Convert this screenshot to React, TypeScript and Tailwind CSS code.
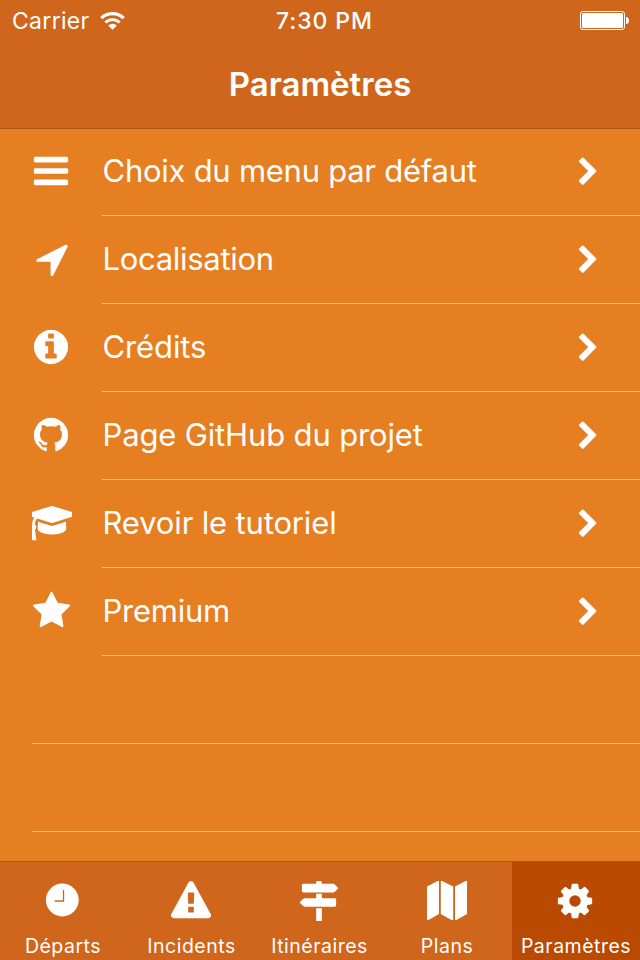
import React from "react";

const BARS =
  "M1664 1344v128q0 26-19 45t-45 19h-1408q-26 0-45-19t-19-45v-128q0-26 19-45t45-19h1408q26 0 45 19t19 45zm0-512v128q0 26-19 45t-45 19h-1408q-26 0-45-19t-19-45v-128q0-26 19-45t45-19h1408q26 0 45 19t19 45zm0-512v128q0 26-19 45t-45 19h-1408q-26 0-45-19t-19-45v-128q0-26 19-45t45-19h1408q26 0 45 19t19 45z";
const ARROW =
  "M1593 349l-640 1280q-17 35-57 35-5 0-15-2-22-5-35.500-22.500t-13.500-39.500v-576h-576q-22 0-39.500-13.500t-22.500-35.500 4-42 29-30l1280-640q13-7 29-7 27 0 45 19 15 14 18.500 34.500t-6.500 39.500z";
const INFO =
  "M1152 1376v-160q0-14-9-23t-23-9h-96v-512q0-14-9-23t-23-9h-320q-14 0-23 9t-9 23v160q0 14 9 23t23 9h96v320h-96q-14 0-23 9t-9 23v160q0 14 9 23t23 9h448q14 0 23-9t9-23zm-128-896v-160q0-14-9-23t-23-9h-192q-14 0-23 9t-9 23v160q0 14 9 23t23 9h192q14 0 23-9t9-23zm640 416q0 209-103 385.500t-279.500 279.500-385.500 103-385.500-103-279.500-279.500-103-385.500 103-385.500 279.500-279.500 385.500-103 385.500 103 279.500 279.500 103 385.500z";
const GITHUB =
  "M896 128q209 0 385.500 103t279.500 279.500 103 385.500q0 251-146.500 451.500t-378.500 277.500q-27 5-40-7t-13-30q0-3 .5-76.500t.5-134.500q0-97-52-142 57-6 102.500-18t94-39 81-66.500 53-105 20.500-150.500q0-119-79-206 37-91-8-204-28-9-81 11t-92 44l-38 24q-93-26-192-26t-192 26q-16-11-42.500-27t-83.500-38.500-85-13.500q-45 113-8 204-79 87-79 206 0 85 20.500 150t52.500 105 80.500 67 94 39 102.500 18q-39 36-49 103-21 10-45 15t-57 5-65.500-21.500-55.500-62.500q-19-32-48.500-52t-49.500-24l-20-3q-21 0-29 4.500t-5 11.500 9 14 13 12l7 5q22 10 43.500 38t31.500 51l10 23q13 38 44 61.500t67 30 69.500 7 55.500-3.500l23-4q0 38 .5 88.500t.5 54.500q0 18-13 30t-40 7q-232-77-378.500-277.500t-146.500-451.500q0-209 103-385.500t279.500-279.500 385.500-103z";
const CAP =
  "M1774 836l18 316q4 69-82 128t-235 93.500-323 34.500-323-34.500-235-93.500-82-128l18-316 574 181q22 7 48 7t48-7zm530-324q0 23-22 31l-1120 352q-4 1-10 1t-10-1l-652-206q-43 34-71 111.500t-34 178.500q63 36 63 109 0 69-58 107l58 433q2 14-8 25-9 11-24 11h-192q-15 0-24-11-10-11-8-25l58-433q-58-38-58-107 0-73 65-111 11-207 98-330l-333-104q-22-8-22-31t22-31l1120-352q4-1 10-1t10 1l1120 352q22 8 22 31z";
const STAR =
  "M1728 647q0 22-26 48l-363 354 86 500q1 7 1 20 0 21-10.500 35.500t-30.500 14.500q-19 0-40-12l-449-236-449 236q-22 12-40 12-21 0-31.500-14.500t-10.500-35.500q0-6 2-20l86-500-364-354q-25-27-25-48 0-37 56-46l502-73 225-455q19-41 49-41t49 41l225 455 502 73q56 9 56 46z";
const CHEVRON =
  "M1363 877l-742 742q-19 19-45 19t-45-19l-166-166q-19-19-19-45t19-45l531-531-531-531q-19-19-19-45t19-45l166-166q19-19 45-19t45 19l742 742q19 19 19 45t-19 45z";
const WARNING =
  "M1024 1375v-190q0-14-9.500-23.500t-22.500-9.500h-192q-13 0-22.500 9.500t-9.500 23.500v190q0 14 9.500 23.500t22.500 9.500h192q13 0 22.500-9.500t9.500-23.500zm-2-374l18-459q0-12-10-19-13-11-24-11h-220q-11 0-24 11-10 7-10 21l17 457q0 10 10 16.500t24 6.500h185q14 0 23.500-6.500t10.500-16.500zm-14-934l768 1408q35 63-2 126-17 29-46.500 46t-63.500 17h-1536q-34 0-63.500-17t-46.500-46q-37-63-2-126l768-1408q17-31 47-49t65-18 65 18 47 49z";
const SIGNS =
  "M1745 297q10 10 10 23t-10 23l-141 141q-28 28-68 28h-1344q-26 0-45-19t-19-45v-256q0-26 19-45t45-19h576v-64q0-26 19-45t45-19h128q26 0 45 19t19 45v64h512q40 0 68 28zm-977 919h256v576h-256zm832-448q26 0 45 19t19 45v256q0 26-19 45t-45 19h-1344q-40 0-68-28l-141-141q-10-10-10-23t10-23l141-141q28-28 68-28h512v-192h256v192h576z";
const COG =
  "M1152 896q0-106-75-181t-181-75-181 75-75 181 75 181 181 75 181-75 75-181zm512-109v222q0 12-8 23t-20 13l-185 28q-19 54-39 91 35 50 107 138 10 12 10 25t-9 23q-27 37-99 108t-94 71q-12 0-26-9l-138-108q-44 23-91 38-16 136-29 186-7 28-36 28h-222q-14 0-24.500-8.500t-11.500-21.500l-28-184q-49-16-90-37l-141 107q-10 9-25 9-14 0-25-11-126-114-165-168-7-10-7-23 0-12 8-23 15-21 51-66.500t54-70.500q-27-50-41-99l-183-27q-13-2-21-12.500t-8-23.500v-222q0-12 8-23t19-13l186-28q14-46 39-92-40-57-107-138-10-12-10-24 0-10 9-23 26-36 98.500-107.500t94.500-71.500q13 0 26 10l138 107q44-23 91-38 16-136 29-186 7-28 36-28h222q14 0 24.500 8.500t11.500 21.500l28 184q49 16 90 37l142-107q9-9 24-9 13 0 25 10 129 119 165 170 7 8 7 22 0 12-8 23-15 21-51 66.500t-54 70.500q26 50 41 98l183 28q13 2 21 12.500t8 23.500z";

function Glyph({ d, box = "0 0 1792 1792", className }: { d: string; box?: string; className: string }) {
  return (
    <svg viewBox={box} className={className} fill="currentColor">
      <path d={d} />
    </svg>
  );
}

const rows = [
  { label: "Choix du menu par défaut", d: BARS, box: "0 0 1792 1792", shift: "-ml-px", track: "tracking-[-0.26px]" },
  { label: "Localisation", d: ARROW, box: "0 0 1792 1792", shift: "ml-0", track: "tracking-[-0.3px]" },
  { label: "Crédits", d: INFO, box: "0 0 1792 1792", shift: "-ml-px", track: "tracking-[-0.1px]" },
  { label: "Page GitHub du projet", d: GITHUB, box: "0 0 1792 1792", shift: "-ml-px", track: "tracking-[-0.15px]" },
  { label: "Revoir le tutoriel", d: CAP, box: "256 0 1792 1792", shift: "ml-0", track: "tracking-[-0.15px]" },
  { label: "Premium", d: STAR, box: "20 0 1792 1792", shift: "ml-0", track: "tracking-[-0.25px]" },
];

function ClockIcon() {
  return (
    <svg viewBox="0 0 40 40" className="size-10">
      <circle cx="19.300" cy="19" r="16.400" fill="white" />
      <path d="M20.500 9v11H11.700" fill="none" stroke="#d0661c" strokeWidth="1.300" />
    </svg>
  );
}

function MapIcon() {
  return (
    <svg viewBox="0 0 40 40" className="size-10" fill="white">
      <path d="M0 5.500L11.300 -.3Q12 -.5 12 .3V33L1.500 39H0z" />
      <path d="M13.800 .3Q13.800 -.5 14.500 -.3L26.200 5.500V39H24.500L13.800 33z" />
      <path d="M28 5.500L39.200 -.3Q40 -.5 40 .3V33L29.500 39H28z" />
    </svg>
  );
}

const tabs = [
  { label: "Départs", icon: <ClockIcon />, nudge: "pr-[2px]" },
  { label: "Incidents", icon: <Glyph d={WARNING} className="mr-px size-10" />, nudge: "pr-px" },
  { label: "Itinéraires", icon: <Glyph d={SIGNS} className="mr-px size-10" />, nudge: "pr-px" },
  { label: "Plans", icon: <MapIcon />, nudge: "pr-[2px]" },
  { label: "Paramètres", icon: <Glyph d={COG} className="mr-[2px] size-10" />, nudge: "pr-0", active: true },
];

export default function App() {
  return (
    <div className="flex h-[960px] w-[640px] flex-col overflow-hidden bg-[#e67e22] font-['Inter',sans-serif] text-white">
      <header className="h-[129px] shrink-0 border-b border-[#a5591a] bg-[#d0661c]">
        <div className="grid h-10 grid-cols-[1fr_auto_1fr] items-center pr-[11px] pl-3 text-[23px] leading-10">
          <div className="flex items-center gap-[10px]">
            <span className="pt-px tracking-[0.3px]">Carrier</span>
            <svg viewBox="0 0 25 18" className="h-[18px] w-[25px]" fill="none" stroke="white">
              <path d="M1.300 6.200a16 16 0 0 1 22.400 0" strokeWidth="3.200" />
              <path d="M5.300 10.600a10.300 10.300 0 0 1 14.400 0" strokeWidth="2.800" />
              <path d="M12.500 17.800L8.200 13.500a6.200 6.200 0 0 1 8.600 0z" fill="white" stroke="none" />
            </svg>
          </div>
          <div className="pt-px pl-2 text-center font-medium tracking-[0.900px]">7:30 PM</div>
          <svg viewBox="0 0 49 19" className="h-[19px] w-[49px] justify-self-end">
            <rect x=".5" y=".5" width="44" height="18" rx="2.500" fill="none" stroke="white" />
            <rect x="2" y="2" width="41" height="15" rx="1.500" fill="white" />
            <path d="M46 6q3 0 3 3.500t-3 3.500z" fill="white" />
          </svg>
        </div>
        <h1 className="mt-[22px] text-center text-[33px] leading-[44px] font-semibold">Paramètres</h1>
      </header>

      <main className="-mt-px flex min-h-0 flex-1 flex-col">
        {rows.map((row) => (
          <div key={row.label} className="flex h-[88px] shrink-0 pl-8">
            <div className="flex w-[70px] items-center pb-[3px]">
              <Glyph d={row.d} box={row.box} className={`size-10 ${row.shift}`} />
            </div>
            <div className="flex flex-1 items-center justify-between border-b border-[#c8c7cc] pr-[37px] pl-[0.500px]">
              <span className={`pb-[2px] text-[31px] leading-[40px] whitespace-nowrap ${row.track}`}>{row.label}</span>
              <Glyph d={CHEVRON} className="mt-[1.500px] size-[30.400px]" />
            </div>
          </div>
        ))}
        <div className="ml-8 h-[88px] shrink-0 border-b border-[#c8c7cc]" />
        <div className="ml-8 h-[88px] shrink-0 border-b border-[#c8c7cc]" />
      </main>

      <nav className="grid h-[99px] shrink-0 grid-cols-5 border-t border-[#b0550f] bg-[#d0661c]">
        {tabs.map((tab) => (
          <div
            key={tab.label}
            className={`flex flex-col items-center pt-[19px] ${tab.nudge} ${tab.active ? "bg-[#ba4a00]" : ""}`}
          >
            {tab.icon}
            <span className="mt-[13px] text-[19.500px] leading-6 tracking-[0.5px]">{tab.label}</span>
          </div>
        ))}
      </nav>
    </div>
  );
}
